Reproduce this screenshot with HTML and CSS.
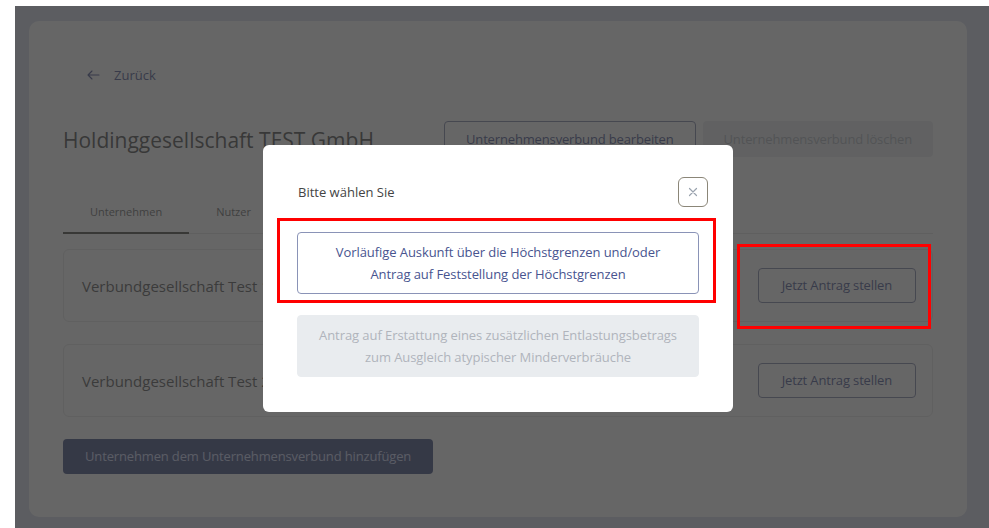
FILE: index.html
```html
<!DOCTYPE html>
<html lang="de">
<head>
<meta charset="utf-8">
<title>Holdinggesellschaft TEST GmbH</title>
<link rel="stylesheet" href="styles.css">
</head>
<body>
<div class="app">
  <main class="card">
    <a class="back" href="#">
      <svg class="back-icon" width="13" height="10" viewBox="0 0 13 10" aria-hidden="true">
        <path d="M12 5H1M5 1L1 5l4 4" fill="none" stroke="currentColor" stroke-width="1.1" stroke-linecap="round" stroke-linejoin="round"/>
      </svg>
      <span>Zurück</span>
    </a>

    <header class="head">
      <h1 class="title">Holdinggesellschaft TEST GmbH</h1>
      <div class="head-actions">
        <button class="btn btn-outline" type="button">Unternehmensverbund bearbeiten</button>
        <button class="btn btn-disabled" type="button">Unternehmensverbund löschen</button>
      </div>
    </header>

    <nav class="tabs">
      <a class="tab tab-active" href="#">Unternehmen</a>
      <a class="tab" href="#">Nutzer</a>
    </nav>

    <ul class="companies">
      <li class="company">
        <span class="company-name">Verbundgesellschaft Test 1</span>
        <button class="btn btn-outline btn-row" type="button">Jetzt Antrag stellen</button>
        <span class="mark mark-row"></span>
      </li>
      <li class="company">
        <span class="company-name">Verbundgesellschaft Test 2</span>
        <button class="btn btn-outline btn-row" type="button">Jetzt Antrag stellen</button>
      </li>
    </ul>

    <button class="btn btn-primary" type="button">Unternehmen dem Unternehmensverbund hinzufügen</button>
  </main>

  <div class="backdrop">
    <div class="modal" role="dialog" aria-modal="true">
      <div class="modal-head">
        <span class="modal-title">Bitte wählen Sie</span>
        <button class="close" type="button" aria-label="Schließen">
          <svg width="10" height="10" viewBox="0 0 10 10" aria-hidden="true">
            <path d="M1.5 1.5l7 7M8.5 1.5l-7 7" stroke="currentColor" stroke-width="1.2" stroke-linecap="round"/>
          </svg>
        </button>
      </div>
      <div class="choices">
        <button class="choice" type="button">Vorläufige Auskunft über die Höchstgrenzen und/oder<br>Antrag auf Feststellung der Höchstgrenzen</button>
        <button class="choice choice-disabled" type="button">Antrag auf Erstattung eines zusätzlichen Entlastungsbetrags<br>zum Ausgleich atypischer Minderverbräuche</button>
      </div>
      <span class="mark mark-choice"></span>
    </div>
  </div>
</div>
</body>
</html>
```

FILE: styles.css
```css
* {
  box-sizing: border-box;
}

html,
body {
  margin: 0;
  height: 100%;
  background: #ffffff;
}

body {
  font-family: "Open Sans", "Noto Sans", sans-serif;
  font-size: 13px;
  color: #444444;
}

button {
  font: inherit;
  cursor: pointer;
}

.app {
  position: relative;
  margin: 6px 0 0 15px;
  height: calc(100% - 6px);
  padding: 15px 22px 11px 14px;
  background: #d7dbeb;
}

.card {
  height: 100%;
  background: #ffffff;
  border-radius: 10px;
  padding: 44px 34px 43px;
  display: flex;
  flex-direction: column;
}

/* back link */
.back {
  display: inline-flex;
  align-items: center;
  gap: 14px;
  align-self: flex-start;
  margin-left: 24px;
  height: 20px;
  color: #4a5590;
  text-decoration: none;
  font-size: 13px;
}

.back-icon {
  display: block;
}

/* page header */
.head {
  margin-top: 37px;
  display: flex;
  align-items: center;
  justify-content: space-between;
}

.title {
  margin: 0;
  font-size: 21px;
  font-weight: 400;
  color: #4a4a4a;
  line-height: 28px;
}

.head-actions {
  display: flex;
  gap: 7px;
}

.btn {
  height: 37px;
  padding: 0 21px;
  border-radius: 4px;
  border: 1px solid transparent;
  background: #ffffff;
  white-space: nowrap;
  line-height: 1;
  letter-spacing: -0.15px;
}

.btn-outline {
  border-color: #7f86a8;
  color: #4a5590;
}

.btn-disabled {
  background: #e9ecef;
  color: #b0b4bc;
  padding: 0 20px;
  height: 36px;
}

.btn-primary {
  align-self: flex-start;
  margin-top: 22px;
  height: 36px;
  padding: 0 21px;
  background: #3e4c80;
  color: #d0d8f8;
}

/* tabs */
.tabs {
  margin-top: 32px;
  display: flex;
  border-bottom: 1px solid #e2e2e2;
}

.tab {
  padding: 12px 27px 11px;
  line-height: 19px;
  font-size: 11px;
  color: #666666;
  text-decoration: none;
  border-bottom: 2px solid transparent;
  margin-bottom: -1px;
}

.tab-active {
  border-bottom-color: #4a4a42;
}

/* company list */
.companies {
  list-style: none;
  margin: 15px 0 0;
  padding: 0;
  display: flex;
  flex-direction: column;
  gap: 22px;
}

.company {
  position: relative;
  display: flex;
  align-items: center;
  justify-content: space-between;
  padding: 18px 16px 18px 18px;
  border: 1px solid #e6e6e6;
  border-radius: 6px;
}

.company-name {
  font-size: 15px;
  color: #555555;
}

.btn-row {
  height: 35px;
  padding: 0 23px;
}

/* dialog */
.backdrop {
  position: absolute;
  inset: 0;
  z-index: 10;
  background: rgba(51, 51, 51, 0.75);
  padding: 139px 0 0 248px;
}

.modal {
  position: relative;
  width: 470px;
  background: #ffffff;
  border-radius: 6px;
  padding: 32px 34px 35px;
}

.modal-head {
  display: flex;
  align-items: center;
  justify-content: space-between;
  margin-right: -9px;
}

.modal-title {
  font-size: 13px;
  color: #444444;
  padding-left: 1px;
}

.close {
  width: 30px;
  height: 30px;
  padding: 0;
  display: flex;
  align-items: center;
  justify-content: center;
  background: #ffffff;
  border: 1.5px solid #8b8678;
  border-radius: 6px;
  color: #9aa3ae;
}

.choices {
  margin-top: 25px;
  display: flex;
  flex-direction: column;
  gap: 21px;
}

.choice {
  padding: 8px 10px;
  line-height: 22px;
  border: 1px solid #8a93b7;
  border-radius: 4px;
  background: #ffffff;
  color: #48548f;
  text-align: center;
  letter-spacing: -0.07px;
}

.choice-disabled {
  border-color: #e9ecef;
  background: #e9ecef;
  color: #b0b4bc;
}

/* red highlight frames */
.mark {
  position: absolute;
  border: 3px solid #ff0000;
  pointer-events: none;
  z-index: 20;
}

.mark-choice {
  left: 14px;
  top: 73px;
  width: 439px;
  height: 85px;
}

.mark-row {
  right: 1px;
  top: -6px;
  width: 194px;
  height: 85px;
}
```
